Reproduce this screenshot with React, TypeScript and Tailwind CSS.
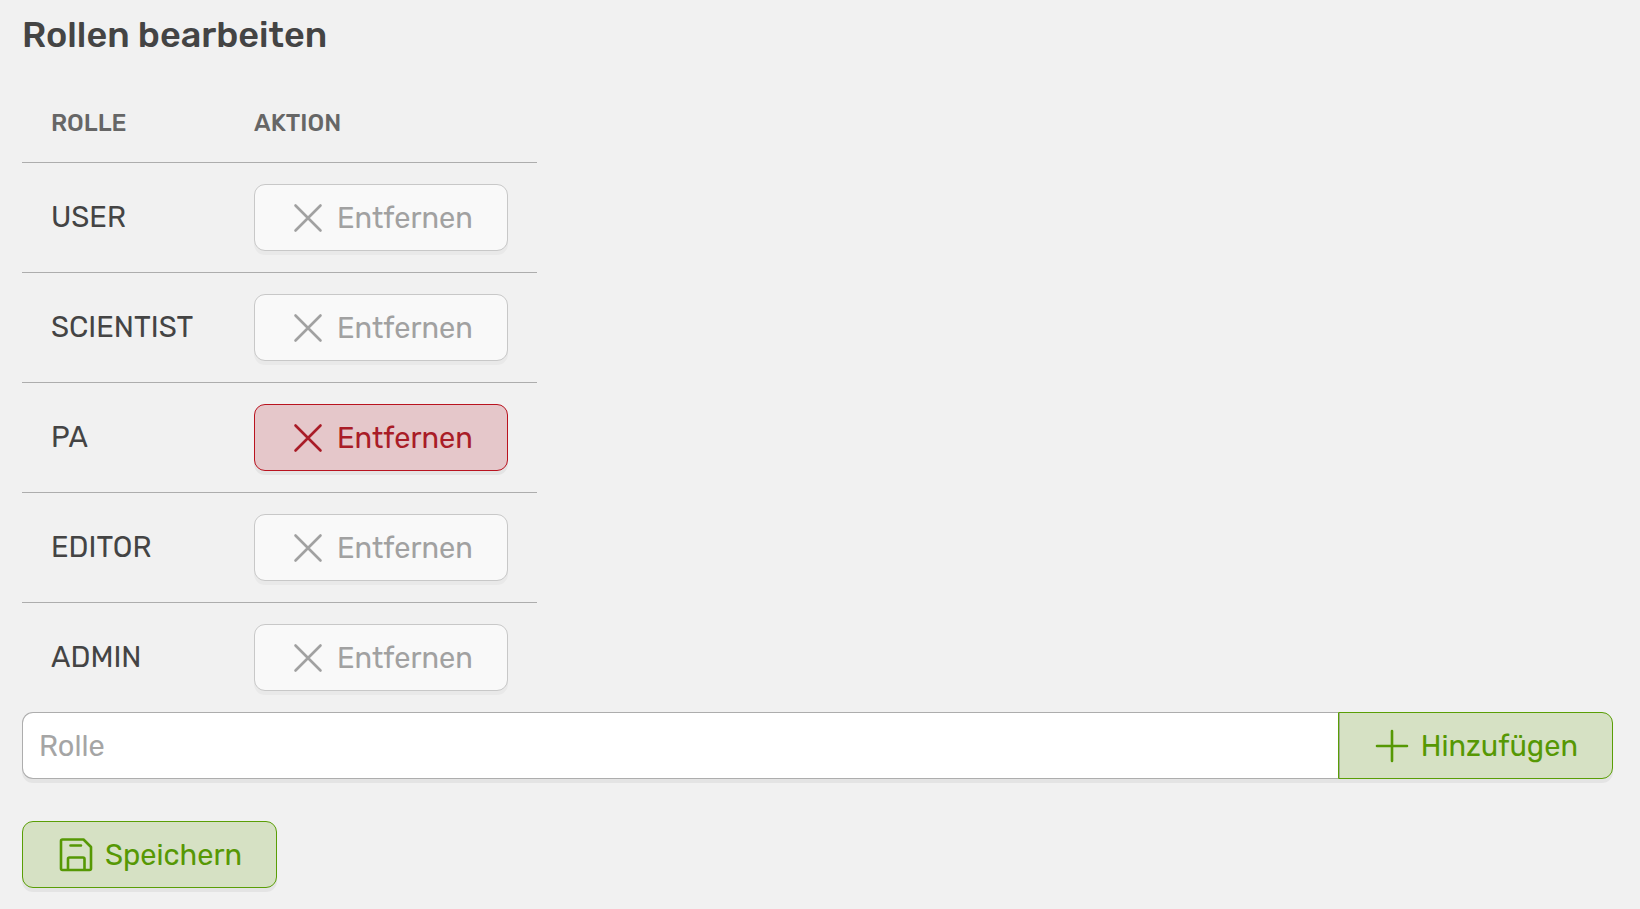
import { useState } from 'react';
import type { ButtonHTMLAttributes, ReactNode } from 'react';

type Tone = 'danger' | 'success';

const tones: Record<Tone, string> = {
  danger:
    'border-[#b9131f] bg-[#e5c7ca] text-[#a91c27] disabled:border-[#c8c8c8] disabled:bg-[#f9f9f9] disabled:text-[#a1a1a1] disabled:shadow-[0_4px_0_#e9e9e9]',
  success: 'border-[#5a9e06] bg-[#d6e1c4] text-[#569804]',
};

const shapes = {
  single: 'rounded-[11px] shadow-[0_4px_0_#e4e4e4]',
  groupEnd: 'rounded-r-[11px] shadow-[inset_1px_0_0_#a3ae94,0_4px_0_#e4e4e4]',
};

interface ActionButtonProps extends ButtonHTMLAttributes<HTMLButtonElement> {
  tone: Tone;
  icon: ReactNode;
  shape?: keyof typeof shapes;
}

function ActionButton({ tone, icon, shape = 'single', children, ...rest }: ActionButtonProps) {
  return (
    <button
      {...rest}
      className={`flex h-[67px] shrink-0 items-center gap-2 border pr-[34px] pl-8 text-[29px] whitespace-nowrap ${shapes[shape]} ${tones[tone]}`}
    >
      {icon}
      <span className="pt-0.5">{children}</span>
    </button>
  );
}

const iconProps = {
  viewBox: '0 0 42 42',
  fill: 'none',
  stroke: 'currentColor',
  strokeWidth: 2.6,
  strokeLinecap: 'round' as const,
  strokeLinejoin: 'round' as const,
  'aria-hidden': true,
  className: 'size-[42px] shrink-0',
};

function CrossIcon() {
  return (
    <svg {...iconProps}>
      <path d="M8.5 8.5 33.5 33.5M33.5 8.5 8.5 33.5" />
    </svg>
  );
}

function PlusIcon() {
  return (
    <svg {...iconProps}>
      <path d="M21 6V36M6 21H36" />
    </svg>
  );
}

function SaveIcon() {
  return (
    <svg {...iconProps}>
      <path d="M7.5 5.5H28.5L36 13V34.5Q36 36 34.5 36H7.5Q6 36 6 34.5V7Q6 5.5 7.5 5.5ZM13 36V25Q13 23.5 14.5 23.5H28Q29.5 23.5 29.5 25V36M15.5 11.5H26" />
    </svg>
  );
}

const initialRoles = [
  { name: 'USER', removable: false },
  { name: 'SCIENTIST', removable: false },
  { name: 'PA', removable: true },
  { name: 'EDITOR', removable: false },
  { name: 'ADMIN', removable: false },
];

export default function App() {
  const [roles, setRoles] = useState(initialRoles);
  const [draft, setDraft] = useState('');

  const addRole = () => {
    const name = draft.trim().toUpperCase();
    if (name && !roles.some((role) => role.name === name)) {
      setRoles([...roles, { name, removable: true }]);
      setDraft('');
    }
  };

  return (
    <main className="min-h-screen bg-[#f1f1f1] pt-[11px] pr-[27px] pb-5 pl-[22px] font-['Rubik','Roboto',sans-serif] text-[#444]">
      <h1 className="mb-[22px] text-[36px] leading-[48px] font-medium">Rollen bearbeiten</h1>

      <table className="border-collapse text-left">
        <thead>
          <tr className="border-b border-[#adadad] text-[24px] leading-[36px] text-[#666]">
            <th scope="col" className="w-[203px] px-[29px] pt-6 pb-[21px] font-medium">ROLLE</th>
            <th scope="col" className="px-[29px] pt-6 pb-[21px] font-medium">AKTION</th>
          </tr>
        </thead>
        <tbody>
          {roles.map((role) => (
            <tr key={role.name} className="border-b border-[#adadad] last:border-b-0">
              <td className="px-[29px] text-[29px]">{role.name}</td>
              <td className="px-[29px] py-[21px]">
                <ActionButton
                  type="button"
                  tone="danger"
                  icon={<CrossIcon />}
                  disabled={!role.removable}
                  onClick={() => setRoles(roles.filter((r) => r.name !== role.name))}
                >
                  Entfernen
                </ActionButton>
              </td>
            </tr>
          ))}
        </tbody>
      </table>

      <div className="flex">
        <input
          type="text"
          aria-label="Rolle"
          placeholder="Rolle"
          value={draft}
          onChange={(event) => setDraft(event.target.value)}
          className="h-[67px] min-w-0 flex-1 rounded-l-[11px] border border-r-0 border-[#adadad] bg-white px-4 text-[29px] shadow-[0_4px_0_#e4e4e4] placeholder:text-[#a5a5a5]"
        />
        <ActionButton type="button" tone="success" icon={<PlusIcon />} shape="groupEnd" onClick={addRole}>
          Hinzufügen
        </ActionButton>
      </div>

      <div className="mt-[42px] flex">
        <ActionButton type="submit" tone="success" icon={<SaveIcon />}>
          Speichern
        </ActionButton>
      </div>
    </main>
  );
}
